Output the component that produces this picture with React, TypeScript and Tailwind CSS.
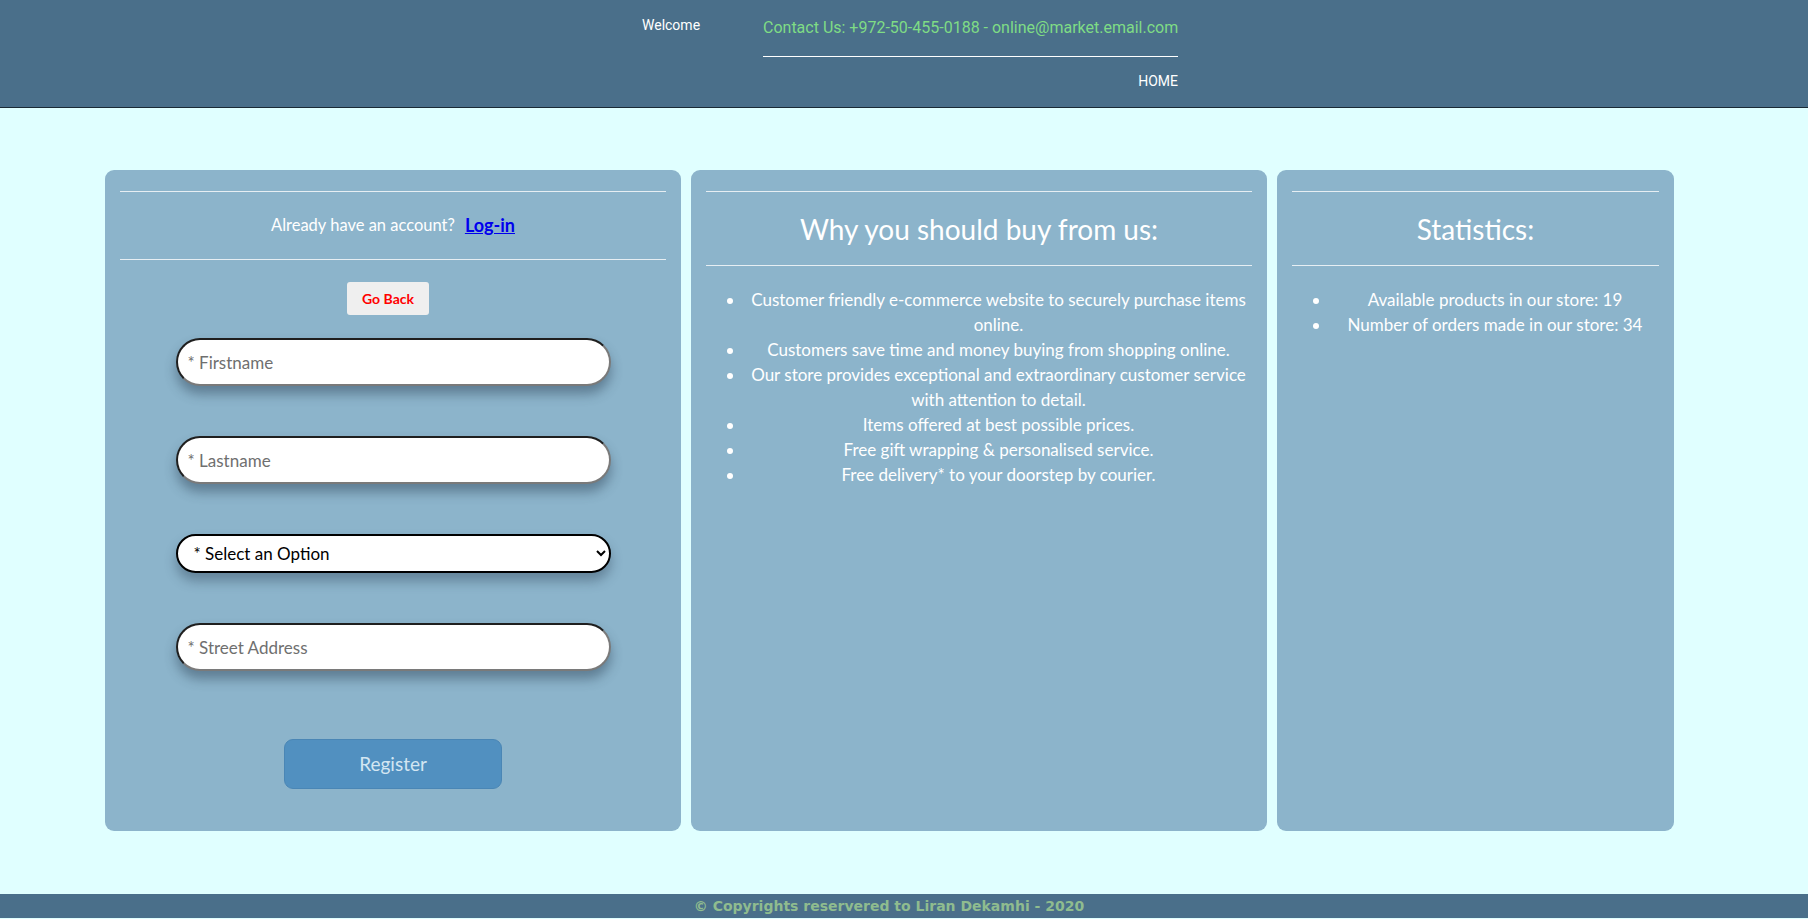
import React from "react";

const gill = { fontFamily: '"Gill Sans", "Gill Sans MT", Lato, sans-serif' };

const Field = ({ placeholder }: { placeholder: string }) => (
  <input
    placeholder={placeholder}
    className="block mx-auto w-[435px] h-[48px] rounded-full bg-white border-2 border-t-[#1f1f1f] border-l-[#1f1f1f] border-r-[#7a7a7a] border-b-[#7a7a7a] px-[10px] text-[17px] text-black placeholder:text-[#6f6f6f] shadow-[0_8px_12px_rgba(40,60,80,0.45)] outline-none"
    style={gill}
  />
);

const Hr = () => <div className="border-t border-[#e6eef3]" />;

const App = () => {
  return (
    <div className="min-h-[919px] bg-[#e0ffff] flex flex-col">
      <header className="h-[108px] bg-[#4a6f8a] border-b border-[#1a2a35] flex pl-[642px]" style={{ fontFamily: "Roboto, sans-serif" }}>
        <div className="w-[121px] pt-[15px] text-[14px] text-white">Welcome</div>
        <div className="w-[415px] pt-[18px]">
          <div className="text-[16px] text-[#7fdc85] leading-[19px] whitespace-nowrap">
            Contact Us: +972-50-455-0188 - online@market.email.com
          </div>
          <div className="mt-[19px] border-t border-white" />
          <div className="mt-[14px] text-right text-[14px] text-white">HOME</div>
        </div>
      </header>

      <main className="flex gap-[10px] pl-[105px] pt-[62px]" style={gill}>
        <section className="w-[576px] h-[661px] bg-[#8cb4cb] rounded-[9px] px-[15px] pt-[21px]">
          <Hr />
          <div className="h-[67px] flex items-center justify-center text-[16.5px] text-white">
            <span>Already have an account?</span>
            <a href="#" className="ml-[10px] text-[#0000ee] font-bold underline text-[18px]">
              Log-in
            </a>
          </div>
          <Hr />
          <button className="block ml-[227px] mt-[22px] w-[82px] h-[33px] bg-[#efefef] rounded-[3px] text-[14px] font-bold text-[#ff0000]">
            Go Back
          </button>
          <div className="mt-[23px]">
            <Field placeholder="* Firstname" />
          </div>
          <div className="mt-[50px]">
            <Field placeholder="* Lastname" />
          </div>
          <div className="mt-[50px]">
            <select
              className="block mx-auto w-[435px] h-[39px] rounded-full bg-white border-2 border-black pl-[12px] pr-[8px] text-[17px] font-normal text-black shadow-[0_8px_12px_rgba(40,60,80,0.4)] outline-none"
              style={gill}
              defaultValue=""
            >
              <option value="">* Select an Option</option>
            </select>
          </div>
          <div className="mt-[50px]">
            <Field placeholder="* Street Address" />
          </div>
          <button className="block mx-auto mt-[68px] w-[218px] h-[50px] rounded-[9px] bg-[#5190c0] border border-[#4a86b5] text-[19px] text-[#d3e6f2]">
            Register
          </button>
        </section>

        <section className="w-[576px] h-[661px] bg-[#8cb4cb] rounded-[9px] px-[15px] pt-[21px] text-white">
          <Hr />
          <h2 className="h-[73px] flex items-center justify-center text-[28px]">Why you should buy from us:</h2>
          <Hr />
          <ul className="mt-[21px] list-disc pl-[39px] text-[17px] leading-[25px] text-center">
            <li>Customer friendly e-commerce website to securely purchase items online.</li>
            <li>Customers save time and money buying from shopping online.</li>
            <li>Our store provides exceptional and extraordinary customer service with attention to detail.</li>
            <li>Items offered at best possible prices.</li>
            <li>Free gift wrapping &amp; personalised service.</li>
            <li>Free delivery* to your doorstep by courier.</li>
          </ul>
        </section>

        <section className="w-[397px] h-[661px] bg-[#8cb4cb] rounded-[9px] px-[15px] pt-[21px] text-white">
          <Hr />
          <h2 className="h-[73px] flex items-center justify-center text-[28px]">Statistics:</h2>
          <Hr />
          <ul className="mt-[21px] list-disc pl-[39px] text-[17px] leading-[25px] text-center">
            <li>Available products in our store: 19</li>
            <li>Number of orders made in our store: 34</li>
          </ul>
        </section>
      </main>

      <footer
        className="mt-[63px] h-[24px] bg-[#4a6f8a] flex items-center justify-center pr-[30px] text-[14px] font-bold text-[#8fbc8f]"
        style={{ fontFamily: '"DejaVu Sans", Verdana, sans-serif' }}
      >
        © Copyrights reservered to Liran Dekamhi - 2020
      </footer>
    </div>
  );
};

export default App;
